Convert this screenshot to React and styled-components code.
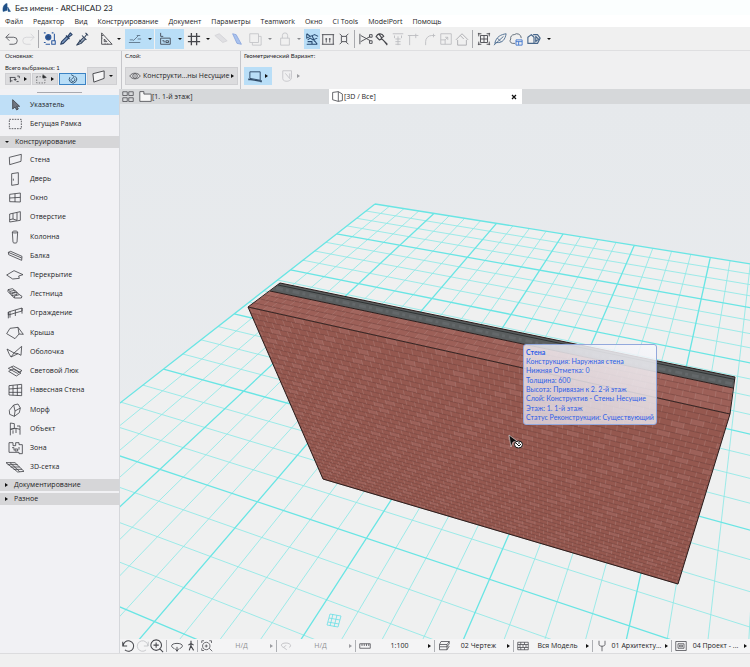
import * as React from "react"
import styled, { createGlobalStyle, css } from "styled-components"

const GlobalStyle = createGlobalStyle`
  * {
    box-sizing: border-box;
  }

  body {
    margin: 0;
    background: #f0f0f0;
    color: #1c1c1e;
    font-family: "Open Sans", "Noto Sans", sans-serif;
    font-size: 7px;
    line-height: 10px;
  }

  button {
    font: inherit;
    color: inherit;
    border: 0;
    padding: 0;
    margin: 0;
    background: transparent;
    cursor: pointer;
  }

  svg {
    flex: none;
  }
`

const Window = styled.div`
  min-height: 100vh;
  display: flex;
  flex-direction: column;
`

const TitleBar = styled.header`
  display: flex;
  align-items: center;
  gap: 4px;
  height: 15px;
  padding-left: 2px;
  background: #fbfefe;
  font-family: Lato, "Open Sans", sans-serif;
  font-size: 8px;
`

const MenuBar = styled.nav`
  display: flex;
  align-items: flex-end;
  gap: 10px;
  height: 12px;
  padding-left: 5px;
  background: #ffffff;
`

const MenuItem = styled.button`
  white-space: nowrap;
`

const Toolbar = styled.div`
  display: flex;
  align-items: center;
  height: 24px;
  padding-left: 4px;
  background: #f0f0f0;
  border-bottom: 1px solid #dfdfe1;
`

const ToolGroup = styled.div`
  display: flex;
  align-items: center;
  height: 20px;
  margin-left: ${props => props.gap || 0}px;
  ${props =>
    props.active &&
    css`
      background: #b9def7;
    `}
`

const ToolButton = styled.button`
  width: ${props => props.w || 16}px;
  height: 20px;
  display: flex;
  align-items: center;
  justify-content: center;
  ${props =>
    props.active &&
    css`
      background: #b9def7;
    `}
`

const Separator = styled.span`
  width: 1px;
  height: ${props => props.h || 18}px;
  margin: 0 3px 0 2px;
  background: #a9aaae;
`

const CaretDown = styled.span`
  border: 2px solid transparent;
  border-top-color: ${props => (props.dim ? "#88898d" : "#111")};
  border-bottom: 0;
`

const CaretRight = styled.span`
  flex: none;
  border: 2px solid transparent;
  border-left: 3px solid ${props => (props.dim ? "#9b9ca0" : "#111")};
  border-right: 0;
`

const InfoBar = styled.section`
  display: flex;
  height: 38px;
  background: #f0f0f1;
`

const InfoCell = styled.div`
  display: flex;
  flex-direction: column;
  justify-content: space-between;
  width: ${props => props.w}px;
  padding: 1px 0 4px ${props => props.left || 4}px;
  border-right: 1px solid ${props => (props.last ? "transparent" : "#c6c6ca")};
`

const InfoLabel = styled.span`
  font-family: Lato, "Open Sans", sans-serif;
  font-size: 6px;
  line-height: 8px;
  white-space: nowrap;
`

const InfoRow = styled.div`
  display: flex;
  align-items: flex-end;
  gap: ${props => props.gap || 1}px;
`

const Chip = styled.button`
  display: flex;
  align-items: center;
  justify-content: ${props => (props.outline ? "center" : "space-between")};
  gap: 2px;
  width: ${props => props.w}px;
  height: ${props => props.h || 18}px;
  padding: 0 3px;
  white-space: nowrap;
  background: ${props => (props.plain ? "transparent" : "#dcdcde")};
  border: 1px solid ${props => (props.plain ? "transparent" : "#cfcfd2")};
  ${props =>
    props.active &&
    css`
      background: #b9def7;
      border-color: ${props.outline ? "#3b83c4" : "#b9def7"};
    `}
`

const Workspace = styled.div`
  flex: 1;
  display: flex;
`

const Sidebar = styled.aside`
  flex: none;
  width: 120px;
  padding-top: 3px;
  background: #f1f1f4;
  border-right: 1px solid #d5d7db;
`

const Grip = styled.div`
  width: 45px;
  height: 1px;
  margin: 0 auto 2px;
  background: #a9aab0;
`

const ToolList = styled.div`
  display: grid;
  grid-auto-rows: 1fr;
  height: ${props => props.h}px;
`

const PaletteTool = styled.button`
  display: flex;
  align-items: center;
  gap: 6px;
  width: 100%;
  padding-left: 6px;
  text-align: left;
  white-space: nowrap;
  font-weight: 500;
  background: ${props => (props.active ? "#bfdff7" : "transparent")};
`

const GroupHeader = styled.button`
  display: flex;
  align-items: center;
  gap: 6px;
  width: 100%;
  height: 12px;
  padding-left: 5px;
  margin: 2px 0;
  background: #d6d6d8;
  font-weight: 500;
  text-align: left;
`

const Main = styled.main`
  flex: 1;
  min-width: 0;
  display: flex;
  flex-direction: column;
`

const TabBar = styled.div`
  display: flex;
  height: 15px;
  background: #d6d8da;
`

const Tab = styled.button`
  display: flex;
  align-items: center;
  height: 15px;
  text-align: left;
  width: ${props => props.w}px;
  padding: 0 4px 0 2px;
  background: ${props => (props.active ? "#ffffff" : "transparent")};

  span {
    flex: 1;
  }
`

const Viewport = styled.div`
  flex: 1;
  position: relative;
  overflow: hidden;
  min-height: 300px;
  background: #e7eaed;
`

const Scene = styled.svg`
  position: absolute;
  inset: 0;
  width: 100%;
  height: 100%;
`

const Tooltip = styled.div`
  position: absolute;
  left: 403px;
  top: 240px;
  padding: 3px 2px 2px;
  border: 1px solid #93a8dc;
  border-radius: 3px;
  background: linear-gradient(
    20deg,
    rgba(226, 220, 230, 0.8),
    rgba(246, 247, 251, 0.85)
  );
  color: #2f5fe8;
  font-family: Lato, "Open Sans", sans-serif;
  font-size: 7px;
  line-height: 9px;
  white-space: nowrap;
`

const TooltipLine = styled.div`
  padding-bottom: ${props => (props.loose ? 1 : 0)}px;
  font-weight: ${props => (props.bold ? 700 : 400)};
`

const StatusBar = styled.div`
  display: flex;
  align-items: center;
  height: 14px;
  background: #f4f4f5;
`

const StatusTools = styled.div`
  display: flex;
  align-items: center;
  width: 77px;
`

const StatusCell = styled.button`
  flex: 1;
  min-width: 0;
  display: flex;
  align-items: center;
  height: 12px;
  padding: 0 3px;
  border-left: 1px solid #aeb0b4;
  white-space: nowrap;
  color: ${props => (props.dim ? "#8e8f93" : "#1c1c1e")};

  span:first-of-type {
    flex: 1;
    text-align: center;
  }
`

const Footer = styled.footer`
  height: 14px;
  background: #f0f0f0;
  border-top: 1px solid #dcdcde;
`

const Icon = ({ d, size = 14, color = "#45464b", sw = 1, fill = "none", children }) => (
  <svg
    width={size}
    height={size}
    viewBox="0 0 16 16"
    fill={fill}
    stroke={color}
    strokeWidth={sw}
    strokeLinejoin="round"
    aria-hidden="true"
  >
    {d && <path d={d} />}
    {children}
  </svg>
)

const PaletteIcon = ({ d, fill = "none", dash }) => (
  <svg
    width="18"
    height="14"
    viewBox="0 0 54 42"
    fill={fill}
    stroke="#3c3d42"
    strokeWidth="2.4"
    strokeLinejoin="round"
    strokeDasharray={dash}
    aria-hidden="true"
  >
    <path d={d} />
  </svg>
)

const ICONS = {
  undo: "M5 2 1 6l4 4M1 6h9a4 4 0 0 1 0 8H5",
  redo: "M11 2l4 4-4 4M15 6H6a4 4 0 0 0 0 8h5",
  undoRound: "M2 3v5h5M2.500 8a6 6 0 1 1 2 4.500",
  redoRound: "M14 3v5H9M13.500 8a6 6 0 1 0-2 4.500",
  dropper: "M2 14l1-3 6-6 2 2-6 6zM8 4l4 4M10 5l3-4 2 2-4 3z",
  syringe: "M2 15l3-4 5-5 2 2-5 5zM8 4l5 5M11 6l3-4M12 1l3 3M5 9l2 2",
  triangle: "M3 1v13h12zM6 8v3h3zM3 4h2M3 7h1M7 14v-1M10 14v-1",
  guide: "M1 12h13M2 9h4M6 10l6-6M10 4h4M11 8h4",
  tracker: "M3 1v4h3M3 7h11v7H3zM5 10h2v2M9 10h3v2H9z",
  grid: "M5 1v14M11 1v14M1 5h14M1 11h14",
  plane: "M1 4l5-2 9 8-5 2z",
  slab: "M3 2l4 1 6 11-5-1z",
  square: "M2 2h10v10H2zM5 12v3h10V5h-3",
  lock: "M3 7h10v8H3zM5 7V4a3 3 0 0 1 6 0v3",
  trace: "M2 2l4 3 5-2 4 2M2 2v5l4-2M3 9l3-2 3 2 5-2M2 14h12M3 11h5v3M11 10l3 4M8 4l3 7",
  ruler: "M1 3h14M1 14h14M2 3v11M14 3v11M6 7v5M10 7v5M5 8h2M9 8h2",
  cross: "M3 2l3 3M13 2l-3 3M3 14l3-3M13 14l-3-3M5 5h6v6H5z",
  scissors: "M1 2v12M2 4l11 6M2 11l11-6M12 3h3v3h-3zM12 10h3v3h-3z",
  wrench: "M1 6c2-5 7-5 9-1l-3 2 7 7M2 6l3 3 3-1M5 3l3 4M10 10l4 5",
  adjust: "M2 2h12M8 5v10M4 4v3M12 4v3M5 8h6M5 11h6M5 14h6",
  corner: "M3 15V4h10M10 2v5M1 4h4",
  fillet: "M3 15V11a7 7 0 0 1 7-7h4M12 2v4",
  resize: "M2 2h12v12H2zM2 9h5v5M10 6l-3 3M10 6v3M10 6H7",
  house: "M1 9l7-7 7 7M3 9v6h10V9M6 4l4 4",
  suspend: "M4 4h8v8H4zM1 2h4M2 1v4M11 2h4M14 1v4M1 14h4M2 11v4M11 14h4M14 11v4M8 4v8M4 8h8",
  feather: "M2 13c2-8 7-10 13-11-1 6-4 11-11 10zM1 15 12 5M5 7l4 4",
  cloud: "M7 13H4a3 3 0 0 1-2-5 4 4 0 0 1 4-5 5 5 0 0 1 8 4",
  boxes: "M1 6l4-3 3 3v7H1zM7 3h5l3 4-3 6H8M10 5v6l3-3z",
  eye: "M1 8c3-5 11-5 14 0-3 5-11 5-14 0zM8 5a3 3 0 1 0 .1 0zM8 7v2",
  wall: "M2 5l12-3v8L3 14z",
  folder: "M1 2h5v3h9v9H1z",
  tiles: "M1 1h6v5H1zM9 1h6v5H9zM1 9h6v5H1zM9 9h6v5H9z",
  view3d: "M2 3l7-1v12l-7-2zM9 2l5 3v8l-5 1",
  zoomIn: "M7 1a6 6 0 1 0 .1 0zM11 11l4 4M7 4v6M4 7h6",
  orbit: "M5 11C0 9 1 5 8 5s8 4 3 6M8 9v5M6 11l2 3 2-3",
  walk: "M8 3v4l-2 6M8 8l3 5M5 7l3-2 3 2M8 2v1",
  fit: "M7 3a5 5 0 1 0 .1 0zM11 11l4 4M1 4V1h3M11 1h3v3M1 11v3h3M7 6v4M5 8h4",
  measure: "M1 5h14v6H1zM4 5v3M7 5v3M10 5v3M13 5v3",
  revolve: "M5 10c-5-2-4-6 3-6 6 0 8 4 4 6M8 7l-3 3 4 3",
  layers: "M4 2h11l-3 4H2zM2 6v3h10l3-4V2M2 9v4h10l3-5M12 6v7",
  model: "M1 3h14v10H1zM1 6h14M1 10h14M5 3v3M10 3v3M4 6v4M8 6v4M12 6v4M5 10v3M10 10v3",
  pen: "M4 1v5c0 3 8 3 8 0V1M8 8v7",
  layout: "M1 2h14v12H1zM4 5h8v6H4zM6 7h4v2H6z",
}

const CONSTRUCT = [
  ["Стена", "M10 13 46 4 45 25 11 35z"],
  ["Дверь", "M17 5 37 2V37L17 40zM22 20v6"],
  ["Окно", "M11 10 43 6V33L11 32zM27 8V33M11 21 43 19"],
  ["Отверстие", "M11 12 43 5V31L11 36zM21 10V27L11 29M21 27 33 31V8"],
  ["Колонна", "M19 6c0-4 16-4 16 0s-16 4-16 0zM19 6 21 37c1 3 11 3 12 0L35 6"],
  ["Балка", "M7 10 14 7 48 22 47 34 8 17zM7 10 47 27"],
  ["Перекрытие", "M2 21 24 8 51 20 38 24 40 31 20 33z"],
  ["Лестница", "M6 8 20 5 26 10 12 13zM12 13 12 19 27 16 27 10 33 16 18 19 18 26 33 22 33 16 40 23 25 27 25 33 46 33 48 28 40 23M6 8v6l19 19"],
  ["Ограждение", "M7 18 48 6V15L7 27zM7 18V37M12 17V35M28 12V30M48 6V23"],
  ["Крыша", "M2 23 12 7 36 4 52 25 39 24 27 38zM36 4 39 24"],
  ["Оболочка", "M3 12 24 24 47 4 45 31 36 26 15 36 10 28zM24 24 15 36M24 24l12 2"],
  ["Световой Люк", "M7 13 22 6 48 20 34 28zM8 22 21 15 45 27 31 36zM16 9l24 15"],
  ["Навесная Стена", "M9 8 47 4V38L9 36zM21 7V37M34 6V38M9 18 47 15M9 28H47"],
  ["Морф", "M23 6 36 3 43 15 40 29 25 40 11 34 10 22zM23 6 27 24 25 40M27 24 43 15"],
  ["Объект", "M13 3 25 5V19L13 22zM13 22V40M13 22 30 19 42 22V38M21 25V35M30 19V33M33 12h9v10"],
  ["Зона", "M9 5h12v9h8V5h10v6h10v27H39v-4H9zM18 20h6v8M27 24h8v6h-8zM39 18v8"],
  ["3D-сетка", "M0 8 27 8 54 34 35 36zM12 8 41 35M5 14 35 14M14 21 41 21M23 28 48 28"],
]

const MENU = [
  "Файл",
  "Редактор",
  "Вид",
  "Конструирование",
  "Документ",
  "Параметры",
  "Teamwork",
  "Окно",
  "CI Tools",
  "ModelPort",
  "Помощь",
]

const STATUS = [
  ["Н/Д", "fit", true],
  ["Н/Д", "revolve", true],
  ["1:100", "measure"],
  ["02 Чертеж", "layers"],
  ["Вся Модель", "model"],
  ["01 Архитекту...", "pen"],
  ["04 Проект - ...", "layout"],
]

// ground plane, one unit per major grid line
const ground = (u, v) => {
  const w = 1 - 0.0295 * u - 0.0839 * v
  return [
    (375 + 46.1 * u - 66.6 * v) / w,
    (204 + 3.1 * u + 10.3 * v) / w,
  ]
}

// maps the unit square onto a quad: top left, top right, bottom right, bottom left
const quadMap = ([p0, p1, p2, p3]) => {
  const dx1 = p1[0] - p2[0]
  const dx2 = p3[0] - p2[0]
  const dx3 = p0[0] - p1[0] + p2[0] - p3[0]
  const dy1 = p1[1] - p2[1]
  const dy2 = p3[1] - p2[1]
  const dy3 = p0[1] - p1[1] + p2[1] - p3[1]
  const det = dx1 * dy2 - dx2 * dy1
  const g = (dx3 * dy2 - dx2 * dy3) / det
  const h = (dx1 * dy3 - dx3 * dy1) / det
  return (u, v) => {
    const w = g * u + h * v + 1
    return [
      ((p1[0] - p0[0] + g * p1[0]) * u + (p3[0] - p0[0] + h * p3[0]) * v + p0[0]) / w,
      ((p1[1] - p0[1] + g * p1[1]) * u + (p3[1] - p0[1] + h * p3[1]) * v + p0[1]) / w,
    ]
  }
}

const pt = p => `${p[0].toFixed(1)} ${p[1].toFixed(1)}`
const segment = (a, b) => `M${pt(a)}L${pt(b)}`

const gridPath = major => {
  let d = ""
  for (let i = 0; i <= 32; i++) {
    if ((i % 4 === 0) !== major) continue
    const k = i / 4
    if (k <= 7) d += segment(ground(k, 0), ground(k, 8))
    d += segment(ground(0, k), ground(7, k))
  }
  return d
}

const bricks = (quad, rows, cols) => {
  const at = quadMap(quad)
  let beds = ""
  let joints = ""
  let tint = ""
  for (let r = 0; r < rows; r++) {
    const v0 = r / rows
    const v1 = (r + 1) / rows
    beds += segment(at(0, v1), at(1, v1))
    for (let c = 0; c < cols; c++) {
      const u = (c + (r % 2) * 0.5 + 0.25) / cols
      joints += segment(at(u, v0), at(u, v1))
      if ((r * 37 + c * 23 + r * c * 7) % 5 === 0) {
        const u1 = Math.min(1, u + 1 / cols)
        tint += `${segment(at(u, v0), at(u1, v0))}L${pt(at(u1, v1))}L${pt(at(u, v1))}z`
      }
    }
  }
  return { beds, joints, tint }
}

const FRONT = [[248, 307], [730, 414], [678, 584], [323, 479]]
const TOP = [[270, 291], [733, 388], [730, 414], [248, 307]]

const toPoints = quad => quad.map(p => p.join(",")).join(" ")

const BrickFace = ({ quad, rows, cols, base }) => {
  const { beds, joints, tint } = bricks(quad, rows, cols)
  return (
    <g fill="none">
      <polygon points={toPoints(quad)} fill={base} />
      <path d={tint} fill="#a9706a" fillOpacity="0.4" />
      <path d={beds} stroke="#6b403b" strokeWidth="1" strokeOpacity="0.5" />
      <path d={joints} stroke="#b58d86" strokeWidth="0.8" strokeOpacity="0.45" />
    </g>
  )
}

const Model = () => (
  <Scene viewBox="120 104 630 535" preserveAspectRatio="xMinYMin slice" role="img" aria-label="3D">
    <defs>
      <linearGradient id="sky" x1="0" y1="0" x2="0" y2="1">
        <stop offset="0" stopColor="#e6e9ec" />
        <stop offset="1" stopColor="#ebedef" />
      </linearGradient>
    </defs>
    <rect x="120" y="104" width="630" height="535" fill="url(#sky)" />
    <polygon
      points={toPoints([ground(0, 0), ground(7, 0), ground(7, 8), ground(0, 8)])}
      fill="#eff0f0"
    />
    <path d={gridPath(false)} stroke="#8de9e6" strokeWidth="1" strokeOpacity="0.85" />
    <path d={gridPath(true)} stroke="#69e5e4" strokeWidth="1.3" />
    <path
      d="M330 614l11 2-3 11-11-2zM333 614l-3 12M337 615l-3 12M329 618l11 2M328 622l11 2"
      stroke="#6adfe6"
      strokeWidth="0.8"
      fill="none"
    />
    <BrickFace quad={FRONT} rows={38} cols={46} base="#95584f" />
    <BrickFace quad={TOP} rows={4} cols={46} base="#9d6058" />
    <polygon points="280,283 735,377 733,388 270,291" fill="#5a5e5f" />
    <path
      d="M276 288 733 384"
      stroke="#64686a"
      strokeWidth="3"
      strokeDasharray="7 3 3 4"
    />
    <path d="M278 285 735 379.500" stroke="#2f3334" strokeWidth="1" />
    <g fill="none" stroke="#2b1d1c" strokeWidth="1" strokeLinejoin="round">
      <path d="M270 291 733 388" />
      <path d="M248 307 730 414" strokeWidth="0.9" />
      <path d="M248 307 280 283 735 377 730 414 678 584 323 479z" />
    </g>
    <path d="M509 435l8 6-4 1-2 5z" fill="#0d0d0d" stroke="#fff" strokeWidth="0.5" />
    <ellipse cx="518.500" cy="444.500" rx="4" ry="3.500" fill="#fff" stroke="#111" strokeWidth="1" />
    <path d="M516 443l3 3 2-2M519 442v2" fill="none" stroke="#111" strokeWidth="1" />
  </Scene>
)

const Tool = ({ name, w, active, color, sw, fill }) => (
  <ToolButton aria-label={name} active={active} w={w}>
    <Icon d={ICONS[name]} color={color} sw={sw} fill={fill} />
  </ToolButton>
)

const Drop = ({ dim, w = 10 }) => (
  <ToolButton aria-label="Меню" w={w}>
    <CaretDown dim={dim} />
  </ToolButton>
)

const MainToolbar = () => (
  <Toolbar>
    <Tool name="undo" color="#55565c" />
    <Tool name="redo" color="#d4d4d7" />
    <Separator />
    <ToolButton aria-label="find">
      <Icon color="#2c5aa0" sw={1.2}>
        <circle cx="6" cy="6" r="3" fill="#2c4f84" />
        <path d="M1 1h2M1 12h2M10 1h2M13 2v8M10 10h4v4h-4zM3 14h5" />
      </Icon>
    </ToolButton>
    <Tool name="dropper" color="#2d4468" fill="#7f9cc4" sw={1.3} />
    <Tool name="syringe" color="#2d3f58" fill="#9aa7bb" sw={1.2} />
    <ToolGroup gap={8}>
      <Tool name="triangle" />
      <Drop />
    </ToolGroup>
    <ToolGroup gap={1} active>
      <Tool name="guide" w={20} color="#5d7388" />
      <Drop w={9} />
    </ToolGroup>
    <ToolGroup gap={1} active>
      <Tool name="tracker" w={20} color="#3f4754" />
      <Drop w={9} />
    </ToolGroup>
    <ToolGroup gap={2}>
      <Tool name="grid" sw={1.5} />
      <Drop w={11} />
    </ToolGroup>
    <Tool name="plane" color="#d3d4d7" fill="#e0e0e3" />
    <Tool name="slab" color="#8ba7de" fill="#a9c2ee" />
    <ToolGroup gap={2}>
      <Tool name="square" color="#c4c5c8" />
      <Drop dim w={13} />
    </ToolGroup>
    <ToolGroup gap={1}>
      <Tool name="lock" color="#c4c5c8" />
      <Drop dim w={11} />
    </ToolGroup>
    <Tool name="trace" active color="#26486f" sw={1.2} />
    <Tool name="ruler" />
    <Tool name="cross" />
    <Separator />
    <Tool name="scissors" />
    <Tool name="wrench" sw={1.3} />
    <Tool name="adjust" color="#bcbdc0" />
    <Tool name="corner" color="#bcbdc0" />
    <Tool name="fillet" color="#bcbdc0" />
    <Tool name="resize" color="#bcbdc0" />
    <Tool name="house" color="#a9aaae" />
    <Separator />
    <Tool name="suspend" />
    <Tool name="feather" color="#47688d" />
    <ToolButton aria-label="cloud">
      <Icon d={ICONS.cloud} color="#55616e">
        <path d="M8 9h7v6H8zM8 11h7M11 11v4" stroke="#3c74cf" />
      </Icon>
    </ToolButton>
    <ToolGroup gap={2}>
      <Tool name="boxes" color="#48678b" sw={1.3} />
      <Drop w={13} />
    </ToolGroup>
  </Toolbar>
)

const InfoBox = () => (
  <InfoBar>
    <InfoCell w={122} left={5}>
      <InfoLabel>Основная:</InfoLabel>
      <InfoRow>
        <div>
          <InfoLabel>Всего выбранных: 1</InfoLabel>
          <InfoRow>
            <Chip w={26} h={12} aria-label="Выбор">
              <Icon size={11} d="M1 5h8M2 5v7M2 10h3M7 8h4M9 5v5M12 3h3v3M11 11h3" sw={1.3} />
              <CaretRight />
            </Chip>
            <Chip w={26} h={12} aria-label="Рамка">
              <Icon size={11}>
                <path d="M1 4h12v9H1z" strokeDasharray="2 2" />
                <path d="M10 1l5 4-5 1z" fill="#222" />
              </Icon>
              <CaretRight />
            </Chip>
            <Chip w={27} h={12} active outline aria-label="Магнит">
              <Icon size={10} d="M3 5a6 6 0 1 0 9-1M5 8a3 3 0 1 0 5-1M5 1l5 3-4 4" sw={1.3} color="#24425f" />
            </Chip>
          </InfoRow>
        </div>
        <Chip w={30} aria-label="Стена">
          <Icon size={15} d={ICONS.wall} fill="#f5f5f6" />
          <CaretDown />
        </Chip>
      </InfoRow>
    </InfoCell>
    <InfoCell w={119} left={3}>
      <InfoLabel>Слой:</InfoLabel>
      <Chip w={113}>
        <Icon size={12} d={ICONS.eye} />
        Конструкти...ны Несущие
        <CaretRight />
      </Chip>
    </InfoCell>
    <InfoCell w={120} left={3} last>
      <InfoLabel>Геометрический Вариант:</InfoLabel>
      <InfoRow gap={5}>
        <Chip w={28} active aria-label="Прямая стена">
          <Icon size={15} color="#2f4a66">
            <path d="M2 3h11v9L2 10z" />
            <path d="M1 11l13 2M1 10v2M14 12v2" strokeWidth="1.5" />
          </Icon>
          <CaretRight />
        </Chip>
        <Chip w={25} plain aria-label="Дуга">
          <Icon size={14} d="M2 2h10v8M2 2v9c0 3 4 3 5 3s5-1 5-4M5 5l5 6M10 5v6" color="#c3c4c8" />
          <CaretRight dim />
        </Chip>
      </InfoRow>
    </InfoCell>
  </InfoBar>
)

const Palette = () => (
  <Sidebar>
    <Grip />
    <ToolList h={39}>
      <PaletteTool active>
        <PaletteIcon d="M20 5v28l7-6 5 9 5-3-5-8h9z" fill="#6f7681" />
        Указатель
      </PaletteTool>
      <PaletteTool>
        <PaletteIcon d="M10 7H46V35H10z" dash="5 3" />
        Бегущая Рамка
      </PaletteTool>
    </ToolList>
    <GroupHeader>
      <CaretDown />
      Конструирование
    </GroupHeader>
    <ToolList h={327}>
      {CONSTRUCT.map(([label, d]) => (
        <PaletteTool key={label}>
          <PaletteIcon d={d} />
          {label}
        </PaletteTool>
      ))}
    </ToolList>
    <GroupHeader>
      <CaretRight />
      Документирование
    </GroupHeader>
    <GroupHeader>
      <CaretRight />
      Разное
    </GroupHeader>
  </Sidebar>
)

const App = () => (
  <>
    <GlobalStyle />
    <Window>
      <TitleBar>
        <Icon size={9} color="#1d4f86" fill="#1d4f86" d="M2 15C1 8 3 2 9 1v12zM10 7l5 8h-4z" />
        Без имени - ARCHICAD 23
      </TitleBar>
      <MenuBar>
        {MENU.map(item => (
          <MenuItem key={item}>{item}</MenuItem>
        ))}
      </MenuBar>
      <MainToolbar />
      <InfoBox />
      <Workspace>
        <Palette />
        <Main>
          <TabBar>
            <Tab w={17} aria-label="Обзор">
              <Icon size={12} d={ICONS.tiles} />
            </Tab>
            <Tab w={192}>
              <Icon size={13} d={ICONS.folder} fill="#f7f7f7" />
              <span>[1. 1-й этаж]</span>
            </Tab>
            <Tab w={193} active>
              <Icon size={13} d={ICONS.view3d} />
              <span>[3D / Все]</span>
              <Icon size={8} d="M4 4l8 8M12 4l-8 8" sw={2.5} color="#111" />
            </Tab>
          </TabBar>
          <Viewport>
            <Model />
            <Tooltip role="tooltip">
              <TooltipLine bold>Стена</TooltipLine>
              <TooltipLine>Конструкция: Наружная стена</TooltipLine>
              <TooltipLine loose>Нижняя Отметка: 0</TooltipLine>
              <TooltipLine>Толщина: 600</TooltipLine>
              <TooltipLine>Высота: Привязан к 2. 2-й этаж</TooltipLine>
              <TooltipLine loose>Слой: Конструктив - Стены Несущие</TooltipLine>
              <TooltipLine>Этаж: 1. 1-й этаж</TooltipLine>
              <TooltipLine>Статус Реконструкции: Существующий</TooltipLine>
            </Tooltip>
          </Viewport>
          <StatusBar>
            <StatusTools>
              <Tool name="undoRound" w={15} sw={1.2} />
              <Tool name="redoRound" w={15} color="#c4c5c8" />
              <Tool name="zoomIn" w={14} sw={1.2} />
              <Separator h={12} />
              <Tool name="orbit" w={14} />
              <Tool name="walk" w={13} sw={1.3} />
            </StatusTools>
            {STATUS.map(([label, icon, dim], i) => (
              <StatusCell key={icon} dim={dim}>
                <Icon size={12} d={ICONS[icon]} color={i === 1 ? "#b5b6ba" : undefined} />
                <span>{label}</span>
                <CaretRight dim={dim} />
              </StatusCell>
            ))}
          </StatusBar>
        </Main>
      </Workspace>
      <Footer />
    </Window>
  </>
)

export default App
